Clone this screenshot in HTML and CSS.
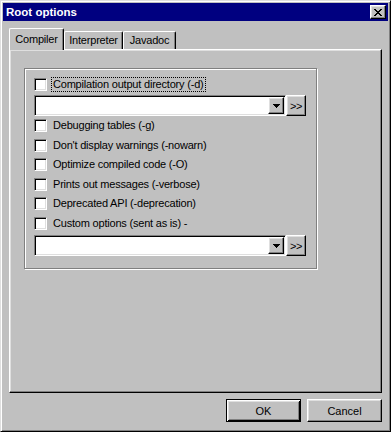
FILE: index.html
```html
<!DOCTYPE html>
<html lang="en">
<head>
    <meta charset="UTF-8">
    <title>Root options</title>
    <link rel="stylesheet" href="styles.css">
</head>
<body>

<div class="window">
    <div class="titlebar">
        <span class="title">Root options</span>
        <button class="close raised">
            <svg width="8" height="7" viewBox="0 0 8 7" shape-rendering="crispEdges">
                <path d="M0 0h2v1H0z M6 0h2v1H6z M1 1h2v1H1z M5 1h2v1H5z M2 2h4v1H2z M3 3h2v1H3z M2 4h4v1H2z M1 5h2v1H1z M5 5h2v1H5z M0 6h2v1H0z M6 6h2v1H6z" fill="#000"/>
            </svg>
        </button>
    </div>

    <div class="client">
        <div class="tabs">
            <div class="tab active">Compiler</div>
            <div class="tab tab-interp">Interpreter</div>
            <div class="tab tab-javadoc">Javadoc</div>
        </div>

        <div class="panel">
            <div class="group">
                <div class="row first">
                    <span class="checkbox"></span>
                    <span class="label focus">Compilation output directory (-d)</span>
                </div>
                <div class="combo-row">
                    <div class="combo">
                        <div class="combo-field"></div>
                        <div class="combo-btn raised">
                            <svg width="7" height="4" viewBox="0 0 7 4" shape-rendering="crispEdges">
                                <path d="M0 0h7v1H0z M1 1h5v1H1z M2 2h3v1H2z M3 3h1v1H3z" fill="#000"/>
                            </svg>
                        </div>
                    </div>
                    <button class="more raised">&gt;&gt;</button>
                </div>

                <div class="checks">
                    <div class="row"><span class="checkbox"></span><span class="label">Debugging tables (-g)</span></div>
                    <div class="row"><span class="checkbox"></span><span class="label">Don't display warnings (-nowarn)</span></div>
                    <div class="row"><span class="checkbox"></span><span class="label">Optimize compiled code (-O)</span></div>
                    <div class="row"><span class="checkbox"></span><span class="label">Prints out messages (-verbose)</span></div>
                    <div class="row"><span class="checkbox"></span><span class="label">Deprecated API (-deprecation)</span></div>
                    <div class="row"><span class="checkbox"></span><span class="label">Custom options (sent as is) -</span></div>
                </div>

                <div class="combo-row last">
                    <div class="combo">
                        <div class="combo-field"></div>
                        <div class="combo-btn raised">
                            <svg width="7" height="4" viewBox="0 0 7 4" shape-rendering="crispEdges">
                                <path d="M0 0h7v1H0z M1 1h5v1H1z M2 2h3v1H2z M3 3h1v1H3z" fill="#000"/>
                            </svg>
                        </div>
                    </div>
                    <button class="more raised">&gt;&gt;</button>
                </div>
            </div>
        </div>

        <div class="actions">
            <button class="btn default">OK</button>
            <button class="btn raised">Cancel</button>
        </div>
    </div>
</div>

</body>
</html>
```

FILE: styles.css
```css
body {
    margin: 0;
    background: #c0c0c0;
    font-family: "Liberation Sans", Arial, sans-serif;
    font-size: 11px;
    letter-spacing: -0.2px;
    color: #000;
}

.window {
    width: 391px;
    height: 432px;
    box-sizing: border-box;
    border: 1px solid;
    border-color: #dfdfdf #000 #000 #dfdfdf;
    box-shadow: inset 1px 1px #fff, inset -1px -1px #808080;
    padding: 2px;
    display: flex;
    flex-direction: column;
    background: #c0c0c0;
}

/* raised 3d edge used by all buttons */
.raised {
    box-sizing: border-box;
    border: 1px solid;
    border-color: #fff #000 #000 #fff;
    box-shadow: inset -1px -1px #808080, inset 1px 1px #dfdfdf;
    background: #c0c0c0;
}

.titlebar {
    height: 18px;
    flex: none;
    background: #000080;
    display: flex;
    align-items: center;
    justify-content: space-between;
    padding: 0 2px 0 3px;
}
.title {
    color: #fff;
    font-weight: bold;
    font-size: 11.5px;
    letter-spacing: 0;
}
.close {
    width: 16px;
    height: 14px;
    padding: 0;
    display: flex;
    align-items: center;
    justify-content: center;
}

.client {
    flex: 1;
    padding: 7px 6px 7px 6px;
    display: flex;
    flex-direction: column;
}

.tabs {
    display: flex;
    align-items: flex-end;
    height: 21px;
    flex: none;
    position: relative;
    z-index: 1;
}
.tab {
    width: 55px;
    height: 18px;
    box-sizing: border-box;
    border: 1px solid;
    border-color: #fff #000 transparent #fff;
    border-bottom: 0;
    border-radius: 2px 2px 0 0;
    box-shadow: inset -1px 0 #808080;
    background: #c0c0c0;
    text-align: center;
    line-height: 17px;
}
.tab.active {
    height: 22px;
    margin-bottom: -1px;
    padding-top: 2px;
}
.tab-interp { width: 59px; }
.tab-javadoc { width: 53px; }

.panel {
    height: 344px;
    flex: none;
    box-sizing: border-box;
    border: 1px solid;
    border-color: #fff #000 #000 #fff;
    box-shadow: inset -1px -1px #808080, inset 1px 1px #dfdfdf;
    padding: 18px 0 0 14px;
}

.group {
    width: 293px;
    height: 201px;
    box-sizing: border-box;
    border: 1px solid #808080;
    box-shadow: inset 1px 1px #fff, 1px 1px #fff;
    padding: 8px 0 0 9px;
}

.row {
    display: flex;
    align-items: center;
    height: 19.5px;
}
.row.first {
    height: 15px;
}
.checkbox {
    width: 13px;
    height: 13px;
    flex: none;
    box-sizing: border-box;
    background: #fff;
    border: 1px solid;
    border-color: #808080 #fff #fff #808080;
    box-shadow: inset 1px 1px #000, inset -1px -1px #dfdfdf;
    margin-right: 4px;
}
.label {
    border: 1px solid transparent;
    padding: 0 1px;
    line-height: 13px;
    white-space: nowrap;
}
.label.focus {
    border: 1px dotted #000;
}

.combo-row {
    display: flex;
    margin-top: 3px;
}
.combo-row.last {
    margin-top: 2px;
}
.combo {
    width: 252px;
    height: 21px;
    box-sizing: border-box;
    border: 1px solid;
    border-color: #808080 #fff #fff #808080;
    box-shadow: inset 1px 1px #000, inset -1px -1px #dfdfdf;
    background: #fff;
    padding: 1px;
    display: flex;
}
.combo-field {
    flex: 1;
}
.combo-btn {
    width: 16px;
    height: 17px;
    display: flex;
    align-items: center;
    justify-content: center;
}
.more {
    width: 20px;
    height: 21px;
    padding: 0;
    font: inherit;
    font-size: 11px;
    letter-spacing: -0.5px;
    color: #000;
}

.actions {
    display: flex;
    justify-content: flex-end;
    gap: 6px;
    margin-top: 6px;
}
.btn {
    width: 75px;
    height: 23px;
    padding: 0;
    font: inherit;
    color: #000;
    background: #c0c0c0;
}
.btn.default {
    box-sizing: border-box;
    border: 1px solid #000;
    box-shadow: inset 1px 1px #fff, inset -1px -1px #000, inset 2px 2px #dfdfdf, inset -2px -2px #808080;
}
```
